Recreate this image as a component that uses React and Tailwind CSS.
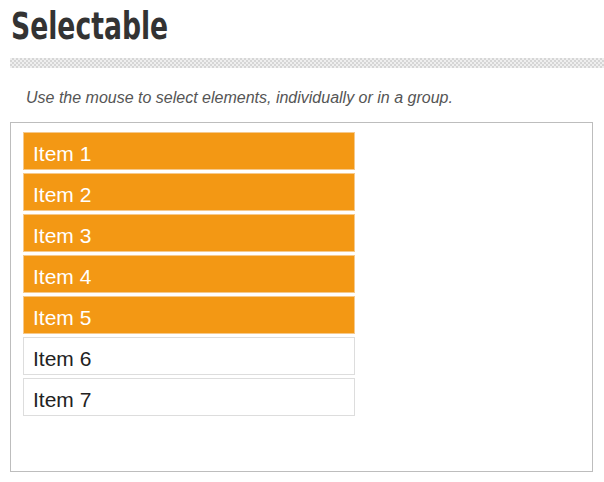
export default function App() {
  const items = [1, 2, 3, 4, 5, 6, 7];
  return (
    <div className="w-[604px] h-[482px] bg-white overflow-hidden font-['Liberation_Sans',Arial,sans-serif]">
      <h1 className="pl-[11px] pt-[6px] h-[58px]">
        <span className="inline-block origin-left scale-x-[0.8] text-[37px] leading-[42px] font-bold text-[#333333] font-['DejaVu_Sans_Condensed','DejaVu_Sans',sans-serif]">
          Selectable
        </span>
      </h1>
      <div className="ml-[10px] h-[10px] bg-[repeating-conic-gradient(#d6d6d6_0%_25%,#efefef_0%_50%)] bg-[length:4px_4px]" />
      <p className="pl-[26px] pt-[20px] h-[54px] text-[16px] leading-[19px] italic text-[#555555]">
        Use the mouse to select elements, individually or in a group.
      </p>
      <div className="ml-[10px] w-[583px] h-[350px] border border-[#bdbdbd] pt-[9px] pl-[12px]">
        <ul className="flex flex-col gap-[3px]">
          {items.map((n) => {
            const sel = n <= 5;
            return (
              <li
                key={n}
                className={
                  sel
                    ? "w-[332px] h-[38px] border border-[#f6c98b] bg-[#f39814] text-white text-[21px] leading-[36px] pl-[9px] pt-[3px]"
                    : "w-[332px] h-[38px] border border-[#dddddd] bg-white text-[#222222] text-[21px] leading-[36px] pl-[9px] pt-[3px]"
                }
              >
                Item {n}
              </li>
            );
          })}
        </ul>
      </div>
    </div>
  );
}
